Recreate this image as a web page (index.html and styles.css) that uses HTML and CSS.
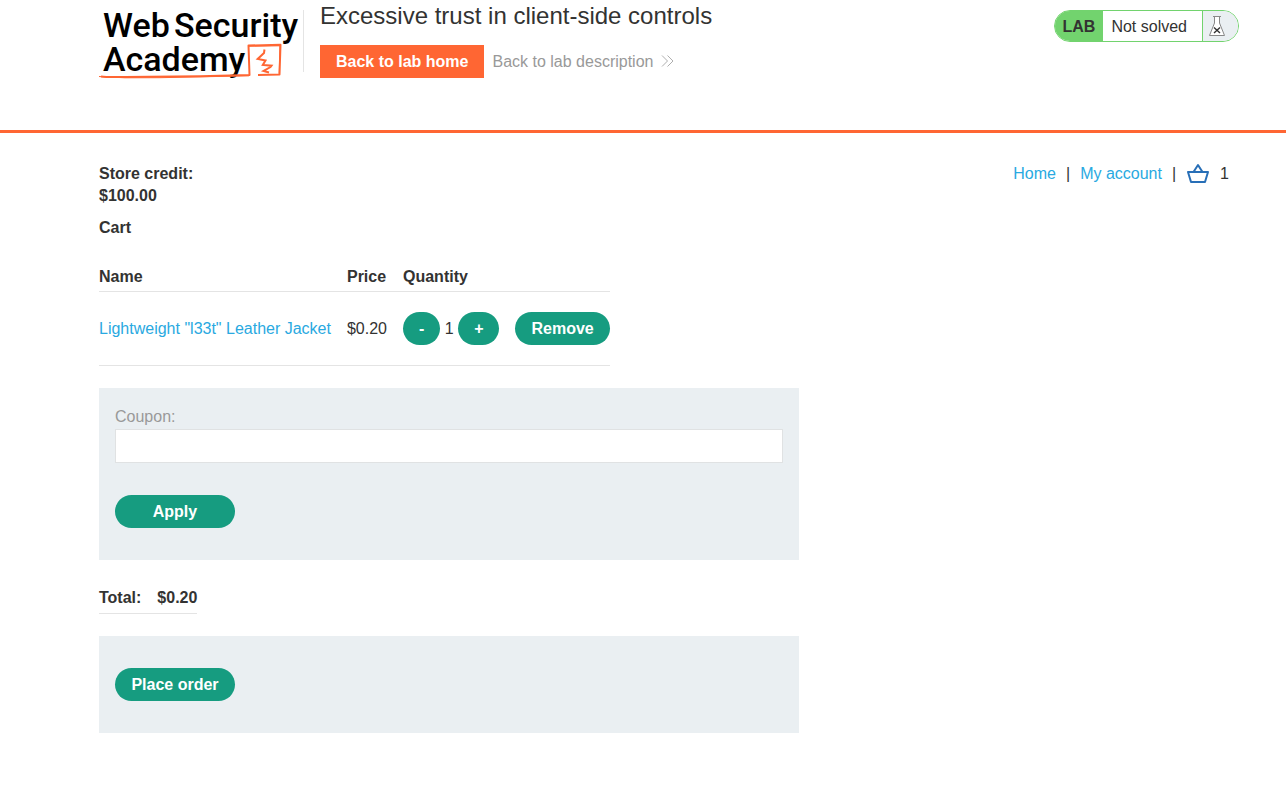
FILE: index.html
```html
<!DOCTYPE html>
<html lang="en">
<head>
<meta charset="utf-8">
<title>Excessive trust in client-side controls</title>
<link rel="stylesheet" href="styles.css">
</head>
<body>
<header class="lab-header">
  <div class="container header-row">
    <a class="logo" href="#" aria-label="Web Security Academy">
      <svg width="204" height="80" viewBox="99 0 204 80">
        <text class="logo-text"><tspan x="103" y="37">Web</tspan><tspan x="174" y="37">Security</tspan><tspan x="103" y="71">Academy</tspan></text>
        <path d="M101 76.500C106 77.300 115 77.200 125 77L200 76.300L249.500 75L248.500 45.500L280.500 44.800L279.500 74.500L258 75" fill="none" stroke="#ff6633" stroke-width="2" stroke-linejoin="round"/>
        <path d="M99 76.500L125 77.800L160 77.700L249 75.800M248 46.300L280 45.800L279.200 73.500" fill="none" stroke="#ff6633" stroke-width="1"/>
        <path d="M264.500 49.500L264 53L257.700 59L265.500 60.500L262.800 65L271.500 65.700L270.500 67L263.500 71L269 72.500" fill="none" stroke="#ff6633" stroke-width="2"/>
      </svg>
    </a>
    <div class="title-block">
      <h1>Excessive trust in client-side controls</h1>
      <div class="title-links">
        <a class="lab-home" href="#">Back to lab home</a>
        <a class="lab-description" href="#">Back to lab description
          <svg width="14" height="14" viewBox="0 0 14 14"><path d="M1 0.500L6.500 6L1 11.500M6.500 0.500L12 6L6.500 11.500" fill="none" stroke="#999" stroke-width="0.800"/></svg>
        </a>
      </div>
    </div>
    <div class="lab-status">
      <span class="lab-tag">LAB</span>
      <span class="lab-state">Not solved</span>
      <span class="lab-flask">
        <svg width="18" height="22" viewBox="0 0 18 22"><path d="M5 1.500H13M6.500 1.500V8L1.500 20.500H16.500L11.500 8V1.500" fill="#fff" stroke="#888" stroke-width="1"/><path d="M6 12.500L12 18M12 12.500L6 18" stroke="#333" stroke-width="1.400"/></svg>
      </span>
    </div>
  </div>
</header>
<main class="container store">
  <div class="store-top">
    <div class="credit"><strong>Store credit:</strong><strong>$100.00</strong></div>
    <nav class="nav">
      <a href="#">Home</a><span>|</span><a href="#">My account</a><span>|</span>
      <a class="basket" href="#" aria-label="Basket"><svg width="24" height="22" viewBox="0 0 24 22"><path d="M2 9H22L19 19H5ZM7.500 9L12 2L16.500 9" fill="none" stroke="#286fb7" stroke-width="2" stroke-linejoin="round"/></svg></a>
      <span>1</span>
    </nav>
  </div>
  <h2>Cart</h2>
  <table class="cart">
    <thead><tr><th>Name</th><th>Price</th><th>Quantity</th><th></th></tr></thead>
    <tbody><tr>
      <td><a href="#">Lightweight "l33t" Leather Jacket</a></td>
      <td>$0.20</td>
      <td><button class="button" type="button">-</button> 1 <button class="button" type="button">+</button></td>
      <td><button class="button" type="button">Remove</button></td>
    </tr></tbody>
  </table>
  <form class="panel coupon">
    <label for="coupon">Coupon:</label>
    <input id="coupon" type="text">
    <button class="button wide" type="button">Apply</button>
  </form>
  <table class="total"><tbody><tr><th>Total:</th><th>$0.20</th></tr></tbody></table>
  <form class="panel order"><button class="button wide" type="button">Place order</button></form>
</main>
</body>
</html>
```
FILE: styles.css
```css
* { box-sizing: border-box; }

body {
  margin: 0;
  background: #fff;
  color: #333332;
  font: 16px/22px "Liberation Sans", Arial, sans-serif;
}

a { color: #29a9e1; text-decoration: none; }

.container { padding: 0 47px 0 99px; }

.lab-header { border-bottom: 3px solid #ff6633; }

.header-row { display: flex; align-items: flex-start; min-height: 130px; }

.logo svg { display: block; overflow: visible; }

.logo-text { font: 500 34px Roboto, sans-serif; fill: #000; }

.title-block { position: relative; flex: 1; padding-left: 17px; }

.title-block::before {
  content: "";
  position: absolute;
  left: 0;
  top: 10px;
  width: 1px;
  height: 62px;
  background: #e4e4e4;
}

h1 { margin: 0 0 13px; font-size: 24px; font-weight: 400; line-height: 32px; }

.title-links { display: flex; align-items: center; gap: 8px; }

.lab-home {
  padding: 0 16px;
  background: #ff6633;
  color: #fff;
  font-weight: 700;
  line-height: 33px;
}

.lab-description { display: flex; align-items: center; gap: 8px; color: #999; }

.lab-status {
  display: flex;
  height: 32px;
  margin-top: 10px;
  overflow: hidden;
  border: 1px solid #72d36e;
  border-radius: 16px;
  line-height: 32px;
}

.lab-tag { padding: 0 8px; background: #72d36e; font-weight: 700; }

.lab-state { padding: 0 15px 0 8px; }

.lab-flask {
  width: 36px;
  padding: 4px 5px;
  border-left: 1px solid #72d36e;
  background: #eaeff2;
}

.lab-flask svg { display: block; }

.store { padding-top: 30px; padding-bottom: 78px; }

.store-top { display: flex; justify-content: space-between; align-items: flex-start; }

.credit strong { display: block; }

.nav { display: flex; gap: 10px; padding-right: 10px; }

.basket svg { display: block; }

h2 { margin: 10px 0 27px; font-size: 16px; line-height: 22px; }

table { border-collapse: separate; border-spacing: 0; }

th, td { padding: 0 16px 0 0; text-align: left; white-space: nowrap; }

th:last-child, td:last-child { padding-right: 0; }

th { padding-bottom: 4px; border-bottom: 1px solid #e4e4e4; }

.cart th { padding-bottom: 3px; }

.cart td { padding-top: 20px; padding-bottom: 20px; border-bottom: 1px solid #e4e4e4; }

.button {
  display: inline-block;
  height: 33px;
  padding: 0 16px;
  border: 0;
  border-radius: 17px;
  background: #169c80;
  color: #fff;
  font: 700 16px/33px "Liberation Sans", Arial, sans-serif;
}

.wide { display: block; min-width: 120px; }

.panel { max-width: 700px; margin: 22px 0; background: #eaeff2; }

.coupon { padding: 18px 16px 32px; }

.coupon label { display: block; margin-bottom: 1px; color: #999; }

.coupon input {
  display: block;
  width: 100%;
  height: 34px;
  margin-bottom: 32px;
  padding: 0 8px;
  border: 1px solid #e0e2e3;
  background: #fff;
  font: inherit;
}

.total { margin-top: 27px; }

.order { padding: 32px 16px; }
```
